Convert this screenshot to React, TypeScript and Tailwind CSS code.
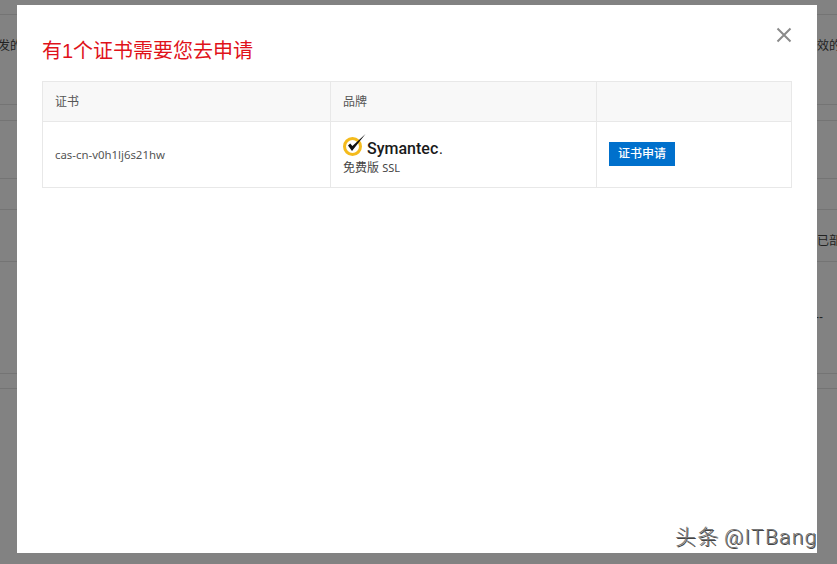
export default function App() {
  const font = { fontFamily: '"Liberation Sans", "Noto Sans CJK SC", sans-serif' };
  const latin = { fontFamily: '"Noto Sans", "Noto Sans CJK SC", sans-serif' };
  const lines = ["h-[15px]", "h-[90px]", "h-[16px]", "h-[58px]", "h-[31px]", "h-[52px]", "h-[112px]", "h-[15px]"];
  return (
    <div className="relative h-[564px] w-[837px] overflow-hidden bg-[#828282]" style={font}>
      <div className="flex flex-col">
        {lines.map((h, i) => (
          <div key={i} className={`${h} box-border border-b border-[#747474]`} />
        ))}
      </div>
      <span className="absolute left-[-2px] top-[38px] text-[12px] leading-[16px] text-[#222]">发的</span>
      <span className="absolute right-0 top-[38px] w-[20px] overflow-hidden whitespace-nowrap text-[12px] leading-[16px] text-[#222]">效的</span>
      <span className="absolute right-0 top-[233px] w-[20px] overflow-hidden whitespace-nowrap text-[12px] leading-[16px] text-[#222]">已部</span>
      <span className="absolute right-[14px] top-[309px] text-[12px] leading-[16px] text-[#222]">--</span>

      <div className="absolute left-[17px] top-[5px] box-border h-[548px] w-[800px] bg-white px-[25px] pt-[30px]">
        <svg
          className="absolute right-[25px] top-[22px]"
          width="16"
          height="16"
          viewBox="0 0 16 16"
          fill="none"
          stroke="#8a8a8a"
          strokeWidth="2"
        >
          <path d="M1.5 1.5 14.5 14.5M14.5 1.5 1.5 14.5" />
        </svg>
        <h2 className="m-0 pt-[1px] text-[20px] font-normal leading-[30px] text-[#e0121a]">有1个证书需要您去申请</h2>
        <div className="mt-[15px] box-border flex w-[750px] flex-col border border-[#e8e8e8] text-[12px] text-[#555]">
          <div className="flex h-[40px] border-b border-[#e8e8e8] bg-[#f8f8f8]">
            <div className="flex w-[288px] items-center border-r border-[#e8e8e8] pl-[12px]">证书</div>
            <div className="flex w-[266px] items-center border-r border-[#e8e8e8] pl-[12px]">品牌</div>
            <div className="flex-1" />
          </div>
          <div className="flex h-[65px]">
            <div className="flex w-[288px] items-center border-r border-[#e8e8e8] pl-[12px] pt-[1px] text-[11.4px]" style={latin}>
              cas-cn-v0h1lj6s21hw
            </div>
            <div className="flex w-[266px] flex-col border-r border-[#e8e8e8] pl-[12px] pt-[12px]">
              <div className="flex h-[25px] items-start">
                <svg className="shrink-0" width="24" height="24" viewBox="0 0 24 24" fill="none">
                  <circle cx="9.5" cy="12.5" r="8" stroke="#f4bb1d" strokeWidth="3" />
                  <path d="M5 11.5 9 17 22.5 0 9.4 12 7.2 9.6Z" fill="#111" />
                </svg>
                <span className="mt-[5px] text-[16px] font-medium leading-[20px] text-[#1a1a1a]" style={{ fontFamily: "Roboto, sans-serif" }}>
                  Symantec<span className="ml-[1px] text-[12px]">.</span>
                </span>
              </div>
              <div className="text-[#444]" style={latin}>
                <span className="text-[12px] leading-[16px]">免费版 </span>
                <span className="text-[11px] leading-[16px]">SSL</span>
              </div>
            </div>
            <div className="flex flex-1 items-start pl-[12px] pt-[20px]">
              <div className="flex h-[24px] w-[66px] items-center justify-center bg-[#0070cc] text-[12px] font-medium text-white">证书申请</div>
            </div>
          </div>
        </div>
      </div>

      <span
        className="absolute left-[675px] top-[523px] text-[21px] font-light leading-[28px] tracking-[1.3px] text-[#777]"
        style={{ fontFamily: 'Roboto, "Noto Sans CJK SC", sans-serif', textShadow: "1px 1px 0 #444", wordSpacing: "-2px" }}
      >
        头条 @ITBang
      </span>
    </div>
  );
}
